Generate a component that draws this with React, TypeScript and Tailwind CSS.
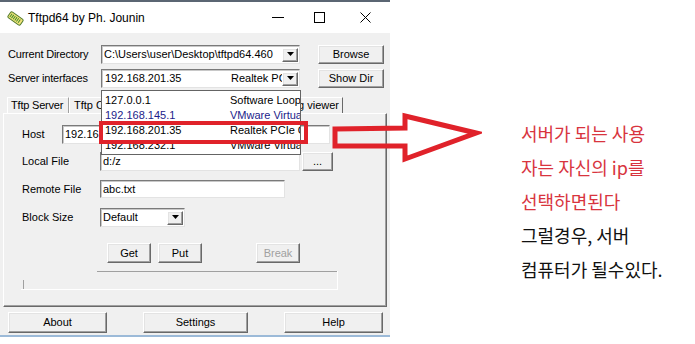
import React from "react";
import clsx from "clsx";

const raised =
    "bg-[#f0f0f0] border border-t-white border-l-white border-r-[#696969] border-b-[#696969] shadow-[inset_-1px_-1px_0_#a0a0a0,inset_1px_1px_0_#e3e3e3]";
const sunken =
    "bg-white border border-t-[#7a7a7a] border-l-[#7a7a7a] border-r-[#e3e3e3] border-b-[#e3e3e3] shadow-[inset_1px_1px_0_#c8c8c8]";

interface BoxProps {
    className?: string;
    children?: React.ReactNode;
}

const Button = ({ className, children, disabled }: BoxProps & { disabled?: boolean }) => (
    <div className={clsx(raised, "flex items-center justify-center text-[11px]", disabled ? "text-[#a0a0a0]" : "text-black", className)}>
        {children}
    </div>
);

const Arrow = () => (
    <svg width="9" height="5" viewBox="0 0 9 5">
        <path d="M1 0 L8 0 L4.5 4 Z" fill="#000" />
    </svg>
);

const Combo = ({ className, children }: BoxProps) => (
    <div className={clsx(sunken, "flex items-center text-[11px] text-black pl-[2px] pr-[1px] overflow-hidden", className)}>
        <div className="flex-1 flex items-center overflow-hidden whitespace-nowrap">{children}</div>
        <div className={clsx(raised, "w-[16px] h-[14px] flex items-center justify-center shrink-0")}>
            <Arrow />
        </div>
    </div>
);

const Input = ({ className, children }: BoxProps) => (
    <div className={clsx(sunken, "flex items-center text-[11px] text-black pl-[2px] overflow-hidden whitespace-nowrap", className)}>
        {children}
    </div>
);

const TftpIcon = () => (
    <svg width="17" height="17" viewBox="0 0 17 17">
        <g transform="rotate(35 8.5 8.5)">
            <rect x="1" y="5" width="15" height="7" rx="1.5" fill="#f2e27a" stroke="#4e7a2a" strokeWidth="1" />
            <path d="M3 6.5 v4 M5 6.5 v4 M7 6.5 v4 M9 6.5 v4 M11 6.5 v4 M13 6.5 v4" stroke="#3e8c2a" strokeWidth="1" />
        </g>
    </svg>
);

const interfaces = [
    { ip: "127.0.0.1", name: "Software Loopback", color: "text-black" },
    { ip: "192.168.145.1", name: "VMware Virtual", color: "text-[#1c1c8a]" },
    { ip: "192.168.201.35", name: "Realtek PCIe GbE", color: "text-black" },
    { ip: "192.168.232.1", name: "VMware Virtual", color: "text-black" },
];

const tabClass = "h-[16px] flex items-center overflow-hidden whitespace-nowrap border border-b-0 border-t-white border-l-white";

export default function App() {
    return (
        <div className="relative w-[695px] h-[344px] bg-white overflow-hidden flex items-start font-['Liberation_Sans',Arial,sans-serif]">
            {/* dialog window */}
            <div className="w-[390px] flex flex-col">
                <div className="h-[2px] bg-[#5b6673]" />
                <div className="h-[31px] bg-white flex items-center">
                    <div className="ml-[7px] mt-[2px]">
                        <TftpIcon />
                    </div>
                    <span className="ml-[4px] text-[12px] text-black">Tftpd64 by Ph. Jounin</span>
                    <div className="ml-auto flex items-center">
                        <div className="w-[12px] h-px bg-black mr-[30px]" />
                        <div className="w-[11px] h-[11px] border border-black mr-[35px]" />
                        <svg width="11" height="11" viewBox="0 0 11 11" className="mr-[19px]">
                            <path d="M0.5 0.5 L10.5 10.5 M10.5 0.5 L0.5 10.5" stroke="#000" strokeWidth="1" />
                        </svg>
                    </div>
                </div>

                <div className="bg-[#f0f0f0] flex flex-col pt-[12px] text-[11px] text-black">
                    <div className="flex items-center h-[19px]">
                        <span className="w-[101px] pl-[8px] tracking-[-0.2px]">Current Directory</span>
                        <Combo className="w-[199px] h-full">C:\Users\user\Desktop\tftpd64.460</Combo>
                        <Button className="ml-[18px] w-[66px] h-[19px]">Browse</Button>
                    </div>
                    <div className="flex items-center h-[19px] mt-[5px]">
                        <span className="w-[101px] pl-[8px] tracking-[-0.2px]">Server interfaces</span>
                        <Combo className="w-[199px] h-full">
                            <span className="w-[127px] shrink-0 pl-[1px]">192.168.201.35</span>
                            <span className="shrink-0">Realtek PCIe</span>
                        </Combo>
                        <Button className="ml-[18px] w-[66px] h-[19px]">Show Dir</Button>
                    </div>

                    {/* tabs */}
                    <div className="flex items-end h-[16px] mt-[9px] pl-[7px]">
                        <div className={clsx(tabClass, "w-[62px] px-[3px] tracking-[-0.2px] border-r-[#a0a0a0]")}>Tftp Server</div>
                        <div className={clsx(tabClass, "w-[62px] px-[4px] border-r-[#a0a0a0]")}>Tftp Client</div>
                        <div className={clsx(tabClass, "w-[154px] px-[5px] border-r-[#a0a0a0]")}>DHCP server</div>
                        <div className={clsx(tabClass, "w-[58px] justify-end pr-[3px] border-r-[#696969]")}>Log viewer</div>
                    </div>
                    <div className="ml-[3px] w-[384px] h-[194px] border border-t-white border-l-white border-r-[#696969] border-b-[#696969] shadow-[inset_-1px_-1px_0_#a0a0a0] flex flex-col pt-[11px]">
                        <div className="flex items-center h-[19px]">
                            <span className="w-[58px] pl-[18px]">Host</span>
                            <Input className="w-[268px] h-full">192.168.201.35</Input>
                        </div>
                        <div className="flex items-center h-[19px] mt-[8px]">
                            <span className="w-[96px] pl-[18px]">Local File</span>
                            <Input className="w-[200px] h-full">d:/z</Input>
                            <Button className="ml-[2px] w-[31px] h-[19px] text-[10px]">...</Button>
                        </div>
                        <div className="flex items-center h-[18px] mt-[9px]">
                            <span className="w-[96px] pl-[18px]">Remote File</span>
                            <Input className="w-[185px] h-full">abc.txt</Input>
                        </div>
                        <div className="flex items-center h-[19px] mt-[10px]">
                            <span className="w-[96px] pl-[18px]">Block Size</span>
                            <Combo className="w-[85px] h-full">Default</Combo>
                        </div>
                        <div className="flex items-center h-[20px] mt-[16px]">
                            <Button className="ml-[103px] w-[44px] h-full">Get</Button>
                            <Button className="ml-[7px] w-[44px] h-full">Put</Button>
                            <Button className="ml-[54px] w-[44px] h-full" disabled>Break</Button>
                        </div>
                        <div className="relative ml-[17px] mt-[8px] w-[317px] h-[19px] border-b border-r border-b-white border-r-white">
                            <div className="absolute left-[76px] right-0 top-0 h-px bg-[#a0a0a0]" />
                            <div className="absolute left-[2px] top-[9px] w-px h-[9px] bg-[#a0a0a0]" />
                        </div>
                    </div>

                    <div className="flex items-center h-[21px] mt-[5px]">
                        <Button className="ml-[8px] w-[99px] h-full">About</Button>
                        <Button className="ml-[36px] w-[105px] h-full">Settings</Button>
                        <Button className="ml-[36px] w-[99px] h-full">Help</Button>
                    </div>
                    <div className="mt-[2px] h-[2px] bg-[#9cbad8]" />
                </div>
            </div>

            {/* explanation text */}
            <div className="flex-1 flex flex-col pl-[131px] pt-[116px] text-[18px] leading-[34px] font-['Noto_Sans_CJK_KR',sans-serif]">
                <span className="text-[#d8343e]">서버가 되는 사용</span>
                <span className="text-[#d8343e]">자는 자신의 ip를</span>
                <span className="text-[#d8343e]">선택하면된다</span>
                <span className="text-[#111]">그럴경우, 서버</span>
                <span className="text-[#111]">컴퓨터가 될수있다.</span>
            </div>

            {/* open dropdown list */}
            <div className="absolute left-[101px] top-[90px] w-[200px] h-[65px] bg-white border border-[#646464] pt-[2px] text-[11px] overflow-hidden">
                {interfaces.map((it) => (
                    <div key={it.ip} className={clsx("flex items-center h-[15px] whitespace-nowrap", it.color)}>
                        <span className="w-[128px] shrink-0 pl-[3px]">{it.ip}</span>
                        <span className="shrink-0">{it.name}</span>
                    </div>
                ))}
            </div>

            {/* red annotation */}
            <div className="absolute left-[99px] top-[121px] w-[209px] h-[23px] border-[4px] border-[#e0222a]" />
            <svg className="absolute left-[328px] top-[110px]" width="154" height="56" viewBox="0 0 154 56">
                <path
                    d="M7 19 L77 18 L77 6 L148 23 L77 49 L77 36 L7 36 Z"
                    fill="none"
                    stroke="#e0222a"
                    strokeWidth="5"
                    strokeLinejoin="miter"
                />
            </svg>
        </div>
    );
}
